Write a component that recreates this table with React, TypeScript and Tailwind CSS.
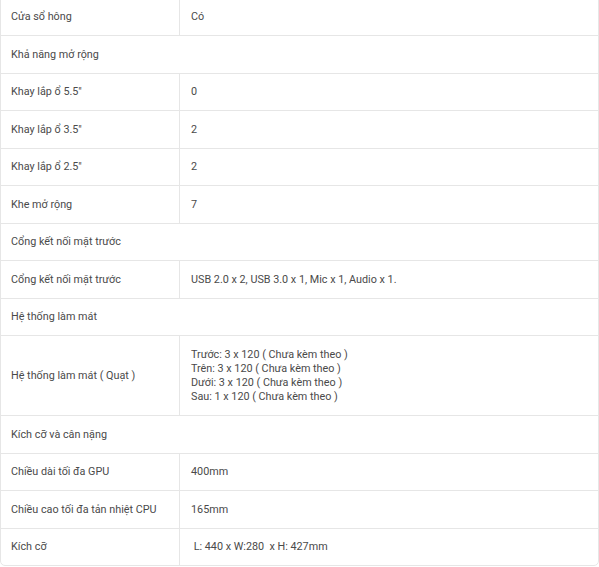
import React from 'react';

type Row =
  | { section: string }
  | { label: string; value: string | string[]; pre?: boolean };

const rows: Row[] = [
  { label: 'Cửa sổ hông', value: 'Có' },
  { section: 'Khả năng mở rộng' },
  { label: 'Khay lắp ổ 5.5"', value: '0' },
  { label: 'Khay lắp ổ 3.5"', value: '2' },
  { label: 'Khay lắp ổ 2.5"', value: '2' },
  { label: 'Khe mở rộng', value: '7' },
  { section: 'Cổng kết nối mặt trước' },
  { label: 'Cổng kết nối mặt trước', value: 'USB 2.0 x 2, USB 3.0 x 1, Mic x 1, Audio x 1.' },
  { section: 'Hệ thống làm mát' },
  {
    label: 'Hệ thống làm mát ( Quạt )',
    value: [
      'Trước: 3 x 120 ( Chưa kèm theo )',
      'Trên: 3 x 120 ( Chưa kèm theo )',
      'Dưới: 3 x 120 ( Chưa kèm theo )',
      'Sau: 1 x 120 ( Chưa kèm theo )',
    ],
  },
  { section: 'Kích cỡ và cân nặng' },
  { label: 'Chiều dài tối đa GPU', value: '400mm' },
  { label: 'Chiều cao tối đa tản nhiệt CPU', value: '165mm' },
  { label: 'Kích cỡ', value: ' L: 440 x W:280  x H: 427mm', pre: true },
];

export default function App() {
  return (
    <div className="w-[599px] h-[567px] overflow-hidden bg-white">
      <div
        className="mt-[-2.5px] w-[599px] border border-[#e6e6e6] rounded-b-[5px] text-[10.8px] text-[#4a4a4a]"
        style={{ fontFamily: 'Roboto, "Liberation Sans", sans-serif' }}
      >
        {rows.map((row, i) => {
          const last = i === rows.length - 1;
          const rowBorder = last ? '' : 'border-b border-[#e6e6e6]';
          if ('section' in row) {
            return (
              <div key={i} className={`${rowBorder} pl-[10px] py-[11.5px] leading-[13.5px]`}>
                {row.section}
              </div>
            );
          }
          const multi = Array.isArray(row.value);
          return (
            <div key={i} className={`flex ${rowBorder}`}>
              <div className="w-[179px] shrink-0 border-r border-[#e6e6e6] pl-[10px] py-[11.5px] leading-[13.5px] flex items-center">
                {row.label}
              </div>
              <div className={`flex-1 pl-[11px] py-[11.5px] ${multi ? 'leading-[14px]' : 'leading-[13.5px]'} ${row.pre ? 'whitespace-pre' : ''}`}>
                {multi ? (row.value as string[]).map((l, j) => <div key={j}>{l}</div>) : row.value}
              </div>
            </div>
          );
        })}
      </div>
    </div>
  );
}
